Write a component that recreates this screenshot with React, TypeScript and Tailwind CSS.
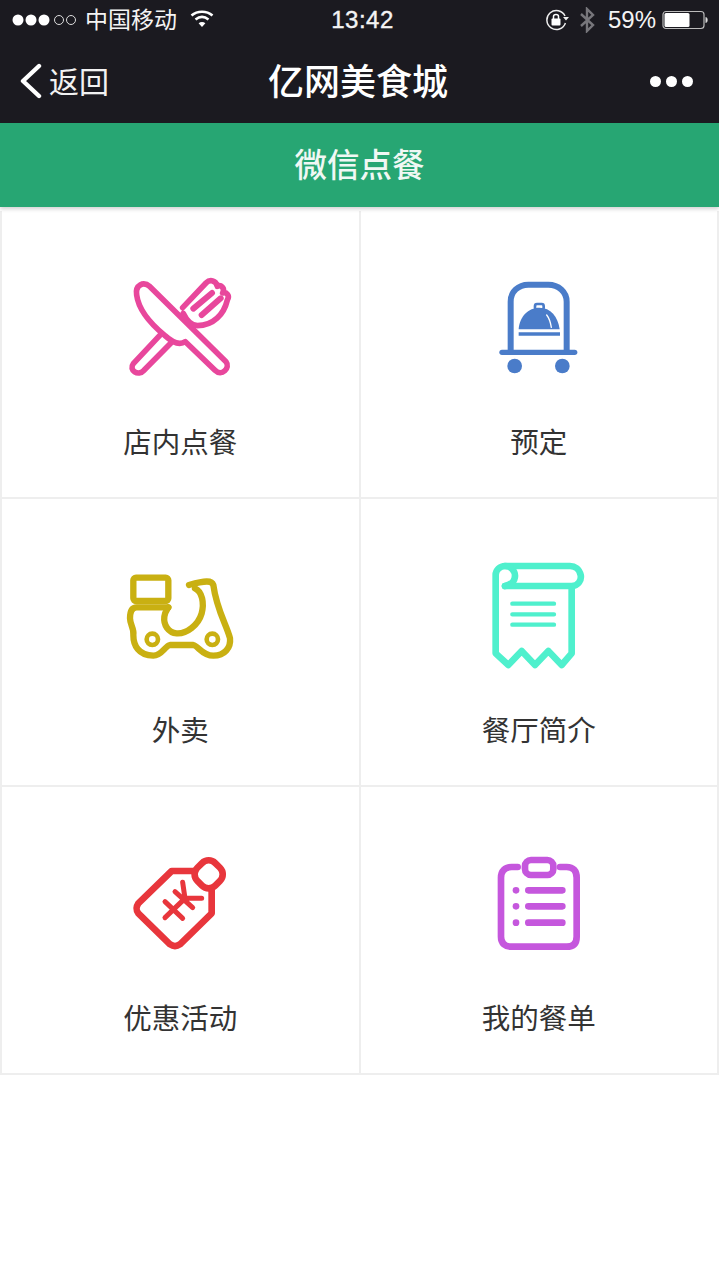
import React from "react";

const FONT = "font-['Noto_Sans_CJK_SC','Noto_Sans_CJK_TC',sans-serif]";

function Art({ dx, dy, children }: { dx: number; dy: number; children: React.ReactNode }) {
  return (
    <svg width="140" height="120" viewBox="0 0 420 360" fill="none" strokeLinecap="round" strokeLinejoin="round">
      <g transform={`translate(${dx} ${dy})`}>{children}</g>
    </svg>
  );
}

const Dining = () => (
  <Art dx={0} dy={0}>
    <g stroke="#e8479c" strokeWidth="17">
      <path d="M80 90C75 60 100 48 120 65L348 290C362 308 335 336 315 316L226 230C210 240 190 235 165 212C120 175 85 130 80 90Z" />
      <path d="M155 205L70 296C55 316 85 335 102 316L185 232" />
      <path d="M218 128L288 54C300 42 318 46 322 64C332 58 346 68 338 84C350 80 360 92 352 105C342 148 310 182 262 182C242 180 228 162 220 145" />
      <path d="M250 131L306 84M275 150L332 100" strokeWidth="18" />
    </g>
  </Art>
);

const Cart = () => (
  <Art dx={33} dy={15}>
    <g stroke="#4a7cc9">
      <path d="M92 243V95C92 65 115 44 145 44H205C235 44 260 65 260 95V243" strokeWidth="18" />
      <path d="M66 247H284" strokeWidth="16" />
      <path d="M116 192H240" strokeWidth="10" strokeLinecap="butt" />
      <rect x="165" y="102" width="26" height="17" rx="6" strokeWidth="8" />
    </g>
    <circle cx="104" cy="288" r="22" fill="#4a7cc9" />
    <circle cx="247" cy="288" r="22" fill="#4a7cc9" />
    <path d="M116 178C118 140 145 113 178 113C212 113 234 140 239 178Z" fill="#4a7cc9" />
    <path d="M200 135C208 145 212 160 214 172" stroke="#fff" strokeWidth="4" />
  </Art>
);

const Scooter = () => (
  <Art dx={15} dy={21}>
    <g stroke="#c9b012" strokeWidth="19">
      <rect x="55" y="53" width="105" height="70" rx="8" />
      <path d="M160 142H65C50 142 45 155 45 175C45 195 58 205 55 225C55 255 70 287 115 287C140 287 150 258 165 255H235C250 258 262 287 295 287C330 287 348 262 345 235C335 195 305 150 295 75C290 60 270 62 222 75" />
      <path d="M240 85C262 95 268 130 260 160C250 195 215 222 185 220C160 218 145 195 148 170C150 155 155 150 160 142" />
      <circle cx="112" cy="238" r="17" strokeWidth="14" />
      <circle cx="292" cy="238" r="17" strokeWidth="14" />
    </g>
  </Art>
);

const Receipt = () => (
  <Art dx={33} dy={6}>
    <g stroke="#4ff0cd" strokeWidth="20">
      <path d="M75 93H275C295 93 305 75 302 60C298 42 285 33 270 33H75C60 33 47 45 47 60V295L85 330L125 288L165 330L205 288L245 330L275 295V95" />
      <path d="M75 33C95 33 105 50 105 62C105 80 90 90 75 93" />
      <path d="M97 146H222M97 178H222M97 209H222" strokeWidth="13" />
    </g>
  </Art>
);

const Tag = () => (
  <Art dx={30} dy={12}>
    <g stroke="#e8363c" strokeWidth="20">
      <path d="M225 78H155L55 175C45 190 50 198 55 205L150 298C160 305 170 305 180 298L275 205V135" />
      <rect x="228" y="50" width="76" height="76" rx="28" transform="rotate(-45 266 88)" />
      <path d="M188 112L195 160H245M195 160L135 218M135 170L188 220M165 140L218 188" strokeWidth="15" />
    </g>
  </Art>
);

const OrderList = () => (
  <Art dx={48} dy={12}>
    <g stroke="#c557dd" strokeWidth="20">
      <path d="M98 66H80C60 66 48 78 48 98V275C48 295 60 305 80 305H245C265 305 275 295 275 275V98C275 78 265 66 245 66H225" />
      <rect x="120" y="45" width="85" height="45" rx="18" />
      <path d="M130 136H232M130 184H232M130 233H232" strokeWidth="20" />
    </g>
    <g fill="#c557dd">
      <circle cx="93" cy="136" r="10" />
      <circle cx="93" cy="184" r="10" />
      <circle cx="93" cy="233" r="10" />
    </g>
  </Art>
);

const items = [
  { label: "店内点餐", icon: <Dining /> },
  { label: "预定", icon: <Cart /> },
  { label: "外卖", icon: <Scooter /> },
  { label: "餐厅简介", icon: <Receipt /> },
  { label: "优惠活动", icon: <Tag /> },
  { label: "我的餐单", icon: <OrderList /> },
];

export default function App() {
  return (
    <div className={`w-[719px] h-[1280px] bg-white overflow-hidden ${FONT}`}>
      <div className="relative z-10 shadow-[0_2px_4px_rgba(0,0,0,0.18)]">
        <div className="bg-[#1b1a20]">
          <div className="h-[40px] flex items-center text-[#f4f4f4]">
            <div className="flex-1 flex items-center pl-[12px]">
              <svg width="66" height="14" viewBox="0 0 66 14">
                <circle cx="6" cy="7" r="5.5" fill="#fff" />
                <circle cx="19" cy="7" r="5.5" fill="#fff" />
                <circle cx="32" cy="7" r="5.5" fill="#fff" />
                <circle cx="47" cy="7" r="4.5" fill="none" stroke="#ddd" strokeWidth="1" />
                <circle cx="59" cy="7" r="4.5" fill="none" stroke="#ddd" strokeWidth="1" />
              </svg>
              <span className="ml-[7px] mb-[4px] text-[23px] leading-[30px]">中国移动</span>
              <svg className="ml-[13px] mb-[2px]" width="24" height="18" viewBox="0 0 24 18" fill="none" stroke="#fff" strokeWidth="2.6">
                <path d="M1.5 5.5C7.5 0.5 16.5 0.5 22.5 5.5" />
                <path d="M5.5 9.5C9.5 6.3 14.5 6.3 18.5 9.5" />
                <path d="M12 17L8.6 13.2C10.5 11.6 13.5 11.6 15.4 13.2Z" fill="#fff" stroke="none" />
              </svg>
            </div>
            <span className="ml-[5px] font-['Liberation_Sans',sans-serif] text-[24px] tracking-[0.5px] font-medium [-webkit-text-stroke:0.4px_#f4f4f4]">13:42</span>
            <div className="flex-1 flex items-center justify-end pr-[11px]">
              <svg width="24" height="22" viewBox="0 0 24 22" fill="none">
                <path d="M20 7A9.5 9.5 0 1 0 20.4 14" stroke="#eee" strokeWidth="1.5" />
                <path d="M18 8L24 8L21 11.5Z" fill="#eee" />
                <rect x="6.5" y="9.5" width="9" height="7" rx="1" fill="#fff" />
                <path d="M8.5 10V7.5C8.5 4.7 13.5 4.7 13.5 7.5V10" stroke="#fff" strokeWidth="1.5" />
              </svg>
              <svg className="ml-[10px]" width="16" height="26" viewBox="0 0 16 26" fill="none" stroke="#77767b" strokeWidth="2.4">
                <path d="M2 7L14 18L8 24V2L14 8L2 19" />
              </svg>
              <span className="ml-[13px] font-['Liberation_Sans',sans-serif] text-[24px]">59%</span>
              <svg className="ml-[6px]" width="46" height="20" viewBox="0 0 46 20">
                <rect x="1" y="1.5" width="41" height="17" rx="3" fill="none" stroke="#bbb" strokeWidth="1.2" />
                <rect x="2.5" y="3" width="25" height="14" rx="1.5" fill="#fff" />
                <path d="M44 7.5C45.5 8 45.5 12 44 12.5Z" fill="#ddd" stroke="#ddd" strokeWidth="1" />
              </svg>
            </div>
          </div>
          <div className="h-[83px] flex items-center text-white">
            <div className="flex-1 flex items-center pl-[20px]">
              <svg className="mb-[2px]" width="24" height="36" viewBox="0 0 24 36" fill="none" stroke="#fff" strokeWidth="4.4" strokeLinecap="round" strokeLinejoin="round">
                <path d="M19 3L3 18L19 33" />
              </svg>
              <span className="ml-[5px] mb-[4px] text-[30px] leading-[40px] text-[#f2f2f2]">返回</span>
            </div>
            <span className="ml-[3px] mb-[5px] text-[36px] leading-[50px] font-medium">亿网美食城</span>
            <div className="flex-1 flex justify-end pr-[26px] gap-[5px]">
              <span className="w-[11px] h-[11px] rounded-full bg-white" />
              <span className="w-[11px] h-[11px] rounded-full bg-white" />
              <span className="w-[11px] h-[11px] rounded-full bg-white" />
            </div>
          </div>
        </div>
        <div className="h-[84px] bg-[#27a673] flex items-center justify-center">
          <span className="mb-[4px] text-[32.5px] font-medium text-[#f0f8f4]">微信点餐</span>
        </div>
      </div>
      <div className="mt-[4px] grid grid-cols-2 border-l-2 border-[#eeeeee]">
        {items.map((item) => (
          <div
            key={item.label}
            className="h-[288px] border-r-2 border-b-2 border-[#eeeeee] flex flex-col items-center pt-[54px]"
          >
            {item.icon}
            <div className="mt-[36px] text-[28.5px] leading-[40px] text-[#333333]">{item.label}</div>
          </div>
        ))}
      </div>
    </div>
  );
}
